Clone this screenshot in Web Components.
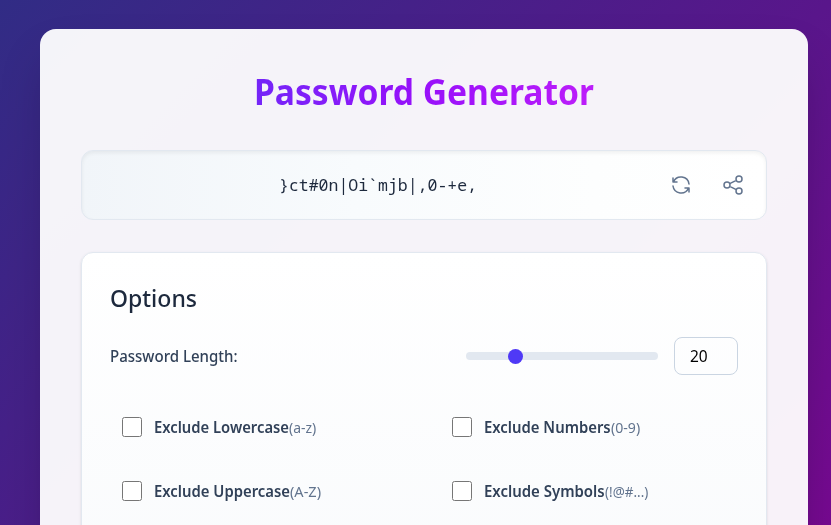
<!DOCTYPE html>
<html lang="en"><head><meta charset="utf-8"><title>Password Generator</title>
<style>
html,body{margin:0;height:525px;overflow:hidden}
body{font-family:"Noto Sans","Open Sans",sans-serif;color:#1d293d}
</style></head>
<body><password-app></password-app>
<script>
const define=(name,html,setup)=>customElements.define(name,class extends HTMLElement{
  connectedCallback(){
    if(this.shadowRoot)return;
    this.attachShadow({mode:'open'}).innerHTML=html;
    if(setup)setup.call(this,this.shadowRoot);
  }
});

// Text set to a fixed measure: the glyphs are narrowed evenly to fill it.
define('fit-text',`<style>:host{display:inline-block;white-space:pre;flex:none}
span{display:inline-block;transform-origin:0 50%;background:var(--ink,none);-webkit-background-clip:text;background-clip:text}</style><span><slot></slot></span>`,
function(r){
  const w=+this.getAttribute('w'),s=r.querySelector('span');
  this.style.width=w+'px';
  s.style.transform='scaleX('+w/s.getBoundingClientRect().width+')';
});

define('line-icon',`<style>:host{display:block;width:24px;height:24px;color:#62748e}svg{display:block}</style>
<svg width="24" height="24" viewBox="0 0 24 24" fill="none" stroke="currentColor" stroke-width="1.5" stroke-linecap="round" stroke-linejoin="round"><path/></svg>`,
function(r){
  r.querySelector('path').setAttribute('d',{
    refresh:'M20 11A8.1 8.1 0 0 0 4.5 9M4 5v4h4M4 13a8.1 8.1 0 0 0 15.5 2M20 19v-4h-4',
    share:'M3 12a3 3 0 1 0 6 0a3 3 0 1 0-6 0M15 6a3 3 0 1 0 6 0a3 3 0 1 0-6 0M15 18a3 3 0 1 0 6 0a3 3 0 1 0-6 0M8.7 10.7l6.6-3.4M8.7 13.3l6.6 3.4'
  }[this.getAttribute('name')]);
});

define('password-field',`<style>:host{box-sizing:border-box;display:flex;align-items:center;height:70px;border:1px solid #e2e8f0;border-radius:12px;background:linear-gradient(to right,#f1f5f9,#f8fbfd 40%,#fdfefe 75%,#fff);box-shadow:inset 0 2px 4px rgba(0,0,0,.06);padding:0 21px 0 0}
.value{flex:1;display:flex;justify-content:center;padding-left:14px;padding-right:10px;font:17px/28px "Noto Sans Mono","DejaVu Sans Mono",monospace;color:#1d293d}
.actions{display:flex;gap:28px}</style>
<div class="value"><slot></slot></div><div class="actions"><line-icon name="refresh"></line-icon><line-icon name="share"></line-icon></div>`);

define('length-slider',`<style>:host{display:flex;align-items:center;width:192px;height:8px;border-radius:4px;background:#e2e8f0}
i{display:block;width:15px;height:15px;margin-left:42px;border-radius:50%;background:#4f39f6}</style><i></i>`);

define('number-box',`<style>:host{box-sizing:border-box;display:flex;align-items:center;width:64px;height:38px;padding-left:15px;border:1px solid #cad5e2;border-radius:8px;font-size:15.5px;line-height:24px;color:#000}</style><slot></slot>`);

define('check-option',`<style>:host{display:flex;align-items:center;height:44px;padding-left:12px}
i{box-sizing:border-box;width:20px;height:20px;border:1px solid #767676;border-radius:2.5px;background:#fff;margin-right:12.2px}
.label{font-size:15.5px;font-weight:600;line-height:24px;color:#314158}
.hint{font-size:13.5px;line-height:20px;color:#62748e;padding-top:1px}</style>
<i></i><span class="label"><slot></slot></span><span class="hint"><slot name="hint"></slot></span>`);

define('options-card',`<style>:host{box-sizing:border-box;display:block;height:400px;padding:29px 28px;border:1px solid #e2e8f0;border-radius:12px;background:linear-gradient(#fff,#f8fafc);box-shadow:0 1px 3px rgba(0,0,0,.1),0 1px 2px -1px rgba(0,0,0,.1)}
h2{margin:0 0 23px;font-size:23.5px;line-height:32px;font-weight:500;color:#1d293d;height:32px}
.row{display:flex;align-items:center;height:38px;gap:16px;margin-bottom:30px}
.name{margin-right:auto;font-size:15.5px;font-weight:500;line-height:24px;color:#314158}
.grid{display:grid;grid-template-columns:1fr 1fr;column-gap:32px;row-gap:20px}</style>
<h2><fit-text w="87">Options</fit-text></h2>
<div class="row"><span class="name"><fit-text w="127.6">Password Length:</fit-text></span><length-slider></length-slider><number-box><fit-text w="17.7">20</fit-text></number-box></div>
<div class="grid">
<check-option><fit-text w="135">Exclude Lowercase</fit-text><fit-text slot="hint" w="27.3">(a-z)</fit-text></check-option>
<check-option><fit-text w="126.7">Exclude Numbers</fit-text><fit-text slot="hint" w="29.2">(0-9)</fit-text></check-option>
<check-option><fit-text w="136">Exclude Uppercase</fit-text><fit-text slot="hint" w="31">(A-Z)</fit-text></check-option>
<check-option><fit-text w="120.7">Exclude Symbols</fit-text><fit-text slot="hint" w="43.3">(!@#...)</fit-text></check-option>
</div>`);

define('password-app',`<style>:host{box-sizing:border-box;display:block;height:525px;overflow:hidden;padding:29px 23px 0 40px;background:linear-gradient(to bottom right,#312c85,#59168b,#8a0194) 0 0/831px 870px no-repeat}
main{box-sizing:border-box;height:771px;padding:40px 41px;border-radius:16px;background:rgba(255,255,255,.95);box-shadow:0 25px 50px -12px rgba(0,0,0,.25)}
h1{margin:0 0 36px;height:45px;text-align:center;font-size:35.5px;line-height:45px;font-weight:700;color:transparent;--ink:linear-gradient(to right,#7425f8,#9810fa 50%,#bd1dfa)}
password-field{margin-bottom:32px}</style>
<main><h1><fit-text w="340">Password Generator</fit-text></h1>
<password-field><fit-text w="198">}ct#0n|Oi\`mjb|,0-+e,</fit-text></password-field>
<options-card></options-card></main>`);
</script></body></html>
